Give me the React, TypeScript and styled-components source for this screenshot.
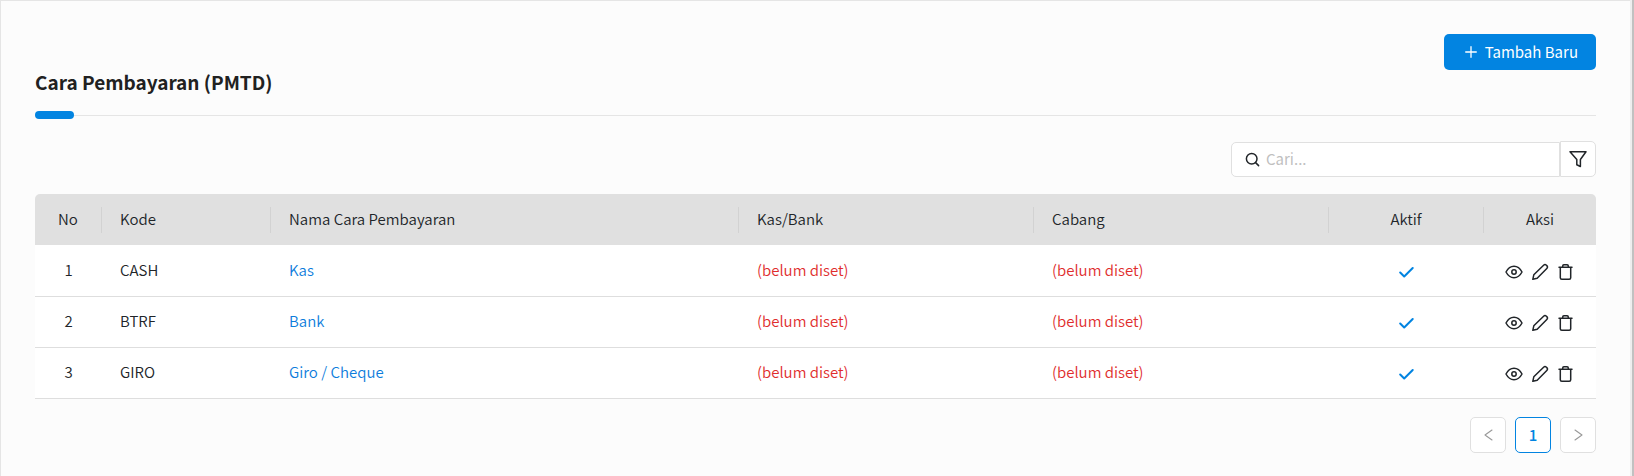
import React from 'react';
import styled, { createGlobalStyle } from 'styled-components';

const GlobalStyle = createGlobalStyle`
  * { box-sizing: border-box; }
  html { background: #fcfcfc; }
  body {
    margin: 0;
    color: #212529;
    font: 350 15px/24px 'Noto Sans CJK SC', 'Noto Sans', sans-serif;
  }
  button, input { font: inherit; color: inherit; }
`;

const Shell = styled.div`
  display: flex;
  min-height: 100vh;
`;

const Page = styled.main`
  flex: 1;
  min-width: 0;
  padding: 33px 34px 23px;
  border-top: 1px solid #e5e5e5;
  border-left: 1px solid #e5e5e5;
`;

const ScrollEdge = styled.div`
  width: 4px;
  border-left: 2px solid #eeeeee;
  background: #c1c1c1;
`;

const Header = styled.header`
  display: flex;
  align-items: flex-start;
  justify-content: space-between;
  height: 82px;
  border-bottom: 1px solid #e5e5e5;
`;

const Title = styled.h1`
  margin: 36px 0 0;
  font-size: 19px;
  line-height: 24px;
  font-weight: 700;
  color: #212121;

  &::after {
    content: '';
    display: block;
    width: 39px;
    height: 8px;
    margin-top: 17px;
    border-radius: 4px;
    background: #0284e1;
  }
`;

const AddButton = styled.button`
  display: flex;
  align-items: center;
  justify-content: center;
  gap: 8px;
  height: 36px;
  padding: 0 18px 0 21px;
  border: 0;
  border-radius: 5px;
  background: #0284e1;
  color: #fff;
  font-weight: 400;
`;

const Toolbar = styled.form`
  display: flex;
  justify-content: flex-end;
  align-items: flex-end;
  margin: 25px 0 17px;
`;

const SearchBox = styled.label`
  display: flex;
  align-items: center;
  gap: 6px;
  width: 329px;
  height: 35px;
  padding: 0 13px 1px;
  border: 1px solid #e0e0e0;
  border-radius: 5px 0 0 5px;
  background: #fff;
`;

const SearchInput = styled.input`
  flex: 1;
  min-width: 0;
  padding: 0;
  border: 0;
  outline: 0;
  background: none;
  font-weight: 400;
  &::placeholder { color: #bfbfbf; opacity: 1; }
`;

const FilterButton = styled.button`
  display: grid;
  place-items: center;
  width: 36px;
  height: 36px;
  padding: 0;
  border: 1px solid #e0e0e0;
  border-radius: 0 5px 5px 0;
  background: #fff;
`;

const Table = styled.table`
  width: 100%;
  table-layout: fixed;
  border-collapse: separate;
  border-spacing: 0;
`;

const Col = styled.col<{ $width?: number }>`
  width: ${(p) => (p.$width ? `${p.$width}px` : 'auto')};
`;

const HeadCell = styled.th<{ $center?: boolean }>`
  height: 52px;
  padding: 0;
  border-bottom: 1px solid #fff;
  background: #e0e0e0;
  font-weight: 350;
  text-align: ${(p) => (p.$center ? 'center' : 'left')};
  &:first-child { border-top-left-radius: 5px; }
  &:last-child { border-top-right-radius: 5px; }
`;

const HeadLabel = styled.span`
  display: block;
  padding: 0 18px 2px;
  ${HeadCell}:not(:last-child) & { border-right: 1px solid #d2d2d2; }
`;

const Cell = styled.td<{ $center?: boolean }>`
  height: 51px;
  padding: 0 18px 2px;
  border-bottom: 1px solid #dedede;
  background: #fff;
  text-align: ${(p) => (p.$center ? 'center' : 'left')};
`;

const NameLink = styled.a`
  color: #0e7ddc;
  text-decoration: none;
`;

const Unset = styled.span`
  color: #e02d2d;
`;

const Actions = styled.div`
  display: flex;
  justify-content: center;
  gap: 8px;
  padding-top: 4px;
`;

const IconButton = styled.button`
  display: grid;
  place-items: center;
  width: 18px;
  height: 18px;
  padding: 0;
  border: 0;
  background: none;
`;

const Pagination = styled.nav`
  display: flex;
  justify-content: flex-end;
  gap: 9px;
  margin-top: 18px;
`;

const PageButton = styled.button<{ $active?: boolean }>`
  display: grid;
  place-items: center;
  width: 36px;
  height: 36px;
  padding: 0 0 1px;
  border: 1px solid ${(p) => (p.$active ? '#0284e1' : '#e0e0e0')};
  border-radius: 5px;
  background: #fff;
  color: ${(p) => (p.$active ? '#0284e1' : '#999')};
  font-weight: ${(p) => (p.$active ? 500 : 400)};
`;

const LineIcon = styled.svg<{ $weight?: number }>`
  display: block;
  flex: none;
  fill: none;
  stroke: currentColor;
  stroke-width: ${(p) => p.$weight ?? 1.5};
  stroke-linecap: round;
  stroke-linejoin: round;
`;

const CheckMark = styled(LineIcon)`
  margin: 4px auto 0;
  color: #0284e1;
`;

const PlusIcon = () => (
  <LineIcon $weight={1.3} width="12" height="12" viewBox="0 0 12 12" aria-hidden="true">
    <path d="M6 .7v10.600M.7 6h10.600" />
  </LineIcon>
);

const SearchIcon = () => (
  <LineIcon width="15" height="15" viewBox="0 0 15 15" aria-hidden="true">
    <circle cx="6.700" cy="6.700" r="5.300" />
    <path d="M10.600 10.600L13.600 13.600" />
  </LineIcon>
);

const FilterIcon = () => (
  <LineIcon width="18" height="18" viewBox="0 0 18 18" aria-hidden="true">
    <path d="M1 1.800h16L11.400 9.500v7L7.800 14.800V9.500Z" />
  </LineIcon>
);

const EyeIcon = () => (
  <LineIcon width="18" height="18" viewBox="0 0 18 18" aria-hidden="true">
    <path d="M1 9C3 5.200 5.700 3.300 9 3.300S15 5.200 17 9C15 12.800 12.300 14.700 9 14.700S3 12.800 1 9Z" />
    <circle cx="9" cy="9" r="2.200" />
  </LineIcon>
);

const PencilIcon = () => (
  <LineIcon width="18" height="18" viewBox="0 0 18 18" aria-hidden="true">
    <path d="M1.800 16.300l1-4.500L12.600 2.200a2 2 0 0 1 2.800 0l.4.400a2 2 0 0 1 0 2.800L6.200 15.200Z" />
  </LineIcon>
);

const TrashIcon = () => (
  <LineIcon width="18" height="18" viewBox="0 0 18 18" aria-hidden="true">
    <path d="M2 4.300h13M3.300 4.300v10.500a1.500 1.500 0 0 0 1.500 1.500h7.400a1.500 1.500 0 0 0 1.500-1.500V4.300M5.700 4.300V2.900a1.200 1.200 0 0 1 1.200-1.200h3.200A1.200 1.200 0 0 1 11.300 2.900v1.400" />
  </LineIcon>
);

const ActiveIcon = () => (
  <CheckMark $weight={2} width="16" height="16" viewBox="0 0 16 16" role="img" aria-label="Aktif">
    <path d="M1.200 8.500L5.200 12.500L13.700 4" />
  </CheckMark>
);

const ChevronIcon = ({ next }: { next?: boolean }) => (
  <LineIcon $weight={1.1} width="14" height="14" viewBox="0 0 14 14" aria-hidden="true">
    <path d={next ? 'M4 2L11 7L4 12' : 'M11 2L4 7L11 12'} />
  </LineIcon>
);

const rows = [
  { code: 'CASH', name: 'Kas' },
  { code: 'BTRF', name: 'Bank' },
  { code: 'GIRO', name: 'Giro / Cheque' },
];

const columns = [
  { label: 'No', width: 67, center: true },
  { label: 'Kode', width: 169 },
  { label: 'Nama Cara Pembayaran' },
  { label: 'Kas/Bank', width: 295 },
  { label: 'Cabang', width: 295 },
  { label: 'Aktif', width: 155, center: true },
  { label: 'Aksi', width: 112, center: true },
];

export default function App() {
  return (
    <Shell>
      <GlobalStyle />
      <Page>
        <Header>
          <Title>Cara Pembayaran (PMTD)</Title>
          <AddButton type="button">
            <PlusIcon />
            Tambah Baru
          </AddButton>
        </Header>

        <Toolbar>
          <SearchBox>
            <SearchIcon />
            <SearchInput type="text" placeholder="Cari..." aria-label="Cari" />
          </SearchBox>
          <FilterButton type="button" aria-label="Filter">
            <FilterIcon />
          </FilterButton>
        </Toolbar>

        <Table>
          <colgroup>
            {columns.map((c) => (
              <Col key={c.label} $width={c.width} />
            ))}
          </colgroup>
          <thead>
            <tr>
              {columns.map((c) => (
                <HeadCell key={c.label} scope="col" $center={c.center}>
                  <HeadLabel>{c.label}</HeadLabel>
                </HeadCell>
              ))}
            </tr>
          </thead>
          <tbody>
            {rows.map((row, i) => (
              <tr key={row.code}>
                <Cell $center>{i + 1}</Cell>
                <Cell>{row.code}</Cell>
                <Cell>
                  <NameLink href="#">{row.name}</NameLink>
                </Cell>
                <Cell>
                  <Unset>(belum diset)</Unset>
                </Cell>
                <Cell>
                  <Unset>(belum diset)</Unset>
                </Cell>
                <Cell $center>
                  <ActiveIcon />
                </Cell>
                <Cell $center>
                  <Actions>
                    <IconButton type="button" aria-label="Lihat">
                      <EyeIcon />
                    </IconButton>
                    <IconButton type="button" aria-label="Ubah">
                      <PencilIcon />
                    </IconButton>
                    <IconButton type="button" aria-label="Hapus">
                      <TrashIcon />
                    </IconButton>
                  </Actions>
                </Cell>
              </tr>
            ))}
          </tbody>
        </Table>

        <Pagination aria-label="Halaman">
          <PageButton type="button" aria-label="Sebelumnya">
            <ChevronIcon />
          </PageButton>
          <PageButton type="button" $active aria-current="page">
            1
          </PageButton>
          <PageButton type="button" aria-label="Berikutnya">
            <ChevronIcon next />
          </PageButton>
        </Pagination>
      </Page>
      <ScrollEdge />
    </Shell>
  );
}
